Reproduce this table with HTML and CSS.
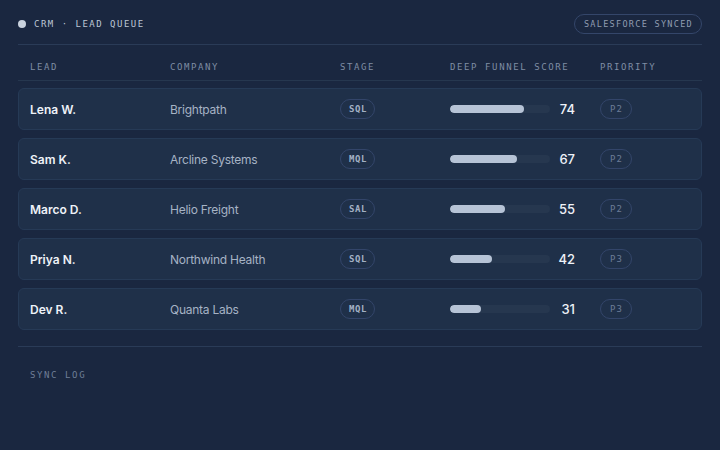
FILE: index.html
```html
<!DOCTYPE html>
<html lang="en">
<head>
    <meta charset="UTF-8">
    <meta name="viewport" content="width=device-width, initial-scale=1.0">
    <title>CRM Lead Queue</title>
    <link rel="stylesheet" href="styles.css">
</head>
<body>
    <div class="topbar">
        <div class="title"><span class="dot"></span>CRM · LEAD QUEUE</div>
        <span class="sync-pill">SALESFORCE SYNCED</span>
    </div>

    <div class="table-head">
        <span>LEAD</span>
        <span>COMPANY</span>
        <span>STAGE</span>
        <span>DEEP FUNNEL SCORE</span>
        <span>PRIORITY</span>
    </div>

    <div class="lead-list">
        <div class="lead-row">
            <span class="lead-name">Lena W.</span>
            <span class="company">Brightpath</span>
            <span class="stage">SQL</span>
            <div class="score">
                <div class="bar"><div class="fill" style="width: 74%"></div></div>
                <span class="score-num">74</span>
            </div>
            <span class="priority">P2</span>
        </div>
        <div class="lead-row">
            <span class="lead-name">Sam K.</span>
            <span class="company">Arcline Systems</span>
            <span class="stage">MQL</span>
            <div class="score">
                <div class="bar"><div class="fill" style="width: 67%"></div></div>
                <span class="score-num">67</span>
            </div>
            <span class="priority">P2</span>
        </div>
        <div class="lead-row">
            <span class="lead-name">Marco D.</span>
            <span class="company">Helio Freight</span>
            <span class="stage">SAL</span>
            <div class="score">
                <div class="bar"><div class="fill" style="width: 55%"></div></div>
                <span class="score-num">55</span>
            </div>
            <span class="priority">P2</span>
        </div>
        <div class="lead-row">
            <span class="lead-name">Priya N.</span>
            <span class="company">Northwind Health</span>
            <span class="stage">SQL</span>
            <div class="score">
                <div class="bar"><div class="fill" style="width: 42%"></div></div>
                <span class="score-num">42</span>
            </div>
            <span class="priority">P3</span>
        </div>
        <div class="lead-row">
            <span class="lead-name">Dev R.</span>
            <span class="company">Quanta Labs</span>
            <span class="stage">MQL</span>
            <div class="score">
                <div class="bar"><div class="fill" style="width: 31%"></div></div>
                <span class="score-num">31</span>
            </div>
            <span class="priority">P3</span>
        </div>
    </div>

    <div class="sync-log">
        <h4>SYNC LOG</h4>
    </div>
</body>
</html>
```

FILE: styles.css
```css
* {
    box-sizing: border-box;
    margin: 0;
    padding: 0;
}

body {
    font-family: Inter, "Noto Sans", sans-serif;
    background: #1a2740;
    color: #e8edf5;
    padding: 14px 18px;
    width: 720px;
    height: 450px;
    overflow: hidden;
}

.topbar {
    display: flex;
    justify-content: space-between;
    align-items: center;
    height: 31px;
    padding-bottom: 10px;
    border-bottom: 1px solid #2a3b57;
}

.title {
    display: flex;
    align-items: center;
    font-family: "DejaVu Sans Mono", monospace;
    font-size: 9px;
    letter-spacing: 1.5px;
    color: #bcc6d5;
}

.dot {
    width: 8px;
    height: 8px;
    border-radius: 50%;
    background: #c9d2de;
    margin-right: 8px;
}

.sync-pill {
    font-family: "DejaVu Sans Mono", monospace;
    font-size: 8.5px;
    letter-spacing: 1.3px;
    color: #8f9cb1;
    border: 1px solid #34466a;
    border-radius: 10px;
    height: 20px;
    line-height: 18px;
    padding: 0 8px 0 9px;
}

.table-head,
.lead-row {
    display: grid;
    grid-template-columns: 140px 170px 110px 150px 1fr;
    align-items: center;
    padding: 0 11px;
}

.table-head {
    font-family: "DejaVu Sans Mono", monospace;
    font-size: 9px;
    letter-spacing: 1.6px;
    color: #7f8da4;
    line-height: 12px;
    padding-top: 16px;
    padding-bottom: 7px;
    padding-left: 12px;
    border-bottom: 1px solid #26374f;
}

.lead-list {
    display: flex;
    flex-direction: column;
    gap: 8px;
    margin-top: 7px;
}

.lead-row {
    height: 42px;
    background: #1f3049;
    border: 1px solid #263a56;
    border-radius: 6px;
}

.lead-name {
    font-size: 12px;
    font-weight: 600;
    color: #eef2f8;
}

.company {
    font-size: 12px;
    letter-spacing: -0.25px;
    color: #a6b3c5;
}

.stage,
.priority {
    justify-self: start;
    font-family: "DejaVu Sans Mono", monospace;
    font-size: 9px;
    height: 20px;
    line-height: 18px;
    border: 1px solid #33456a;
    border-radius: 10px;
}

.stage {
    color: #a3b0c4;
    font-weight: bold;
    letter-spacing: 0.6px;
    padding: 0 7px 0 8px;
}

.priority {
    color: #6d7d97;
    letter-spacing: 1.2px;
    padding: 0 8px 0 9px;
}

.score {
    display: flex;
    align-items: center;
}

.bar {
    width: 100px;
    height: 8px;
    border-radius: 4px;
    background: #26374f;
    overflow: hidden;
}

.fill {
    height: 100%;
    border-radius: 4px;
    background: #b6c3d6;
}

.score-num {
    width: 25px;
    text-align: right;
    font-size: 13px;
    font-weight: 500;
    color: #eef2f8;
}

.sync-log {
    margin-top: 16px;
    border-top: 1px solid #2a3b57;
    padding: 22px 12px 0;
}

.sync-log h4 {
    font-family: "DejaVu Sans Mono", monospace;
    font-size: 9px;
    font-weight: normal;
    letter-spacing: 1.6px;
    line-height: 12px;
    color: #6f7e97;
}
```
